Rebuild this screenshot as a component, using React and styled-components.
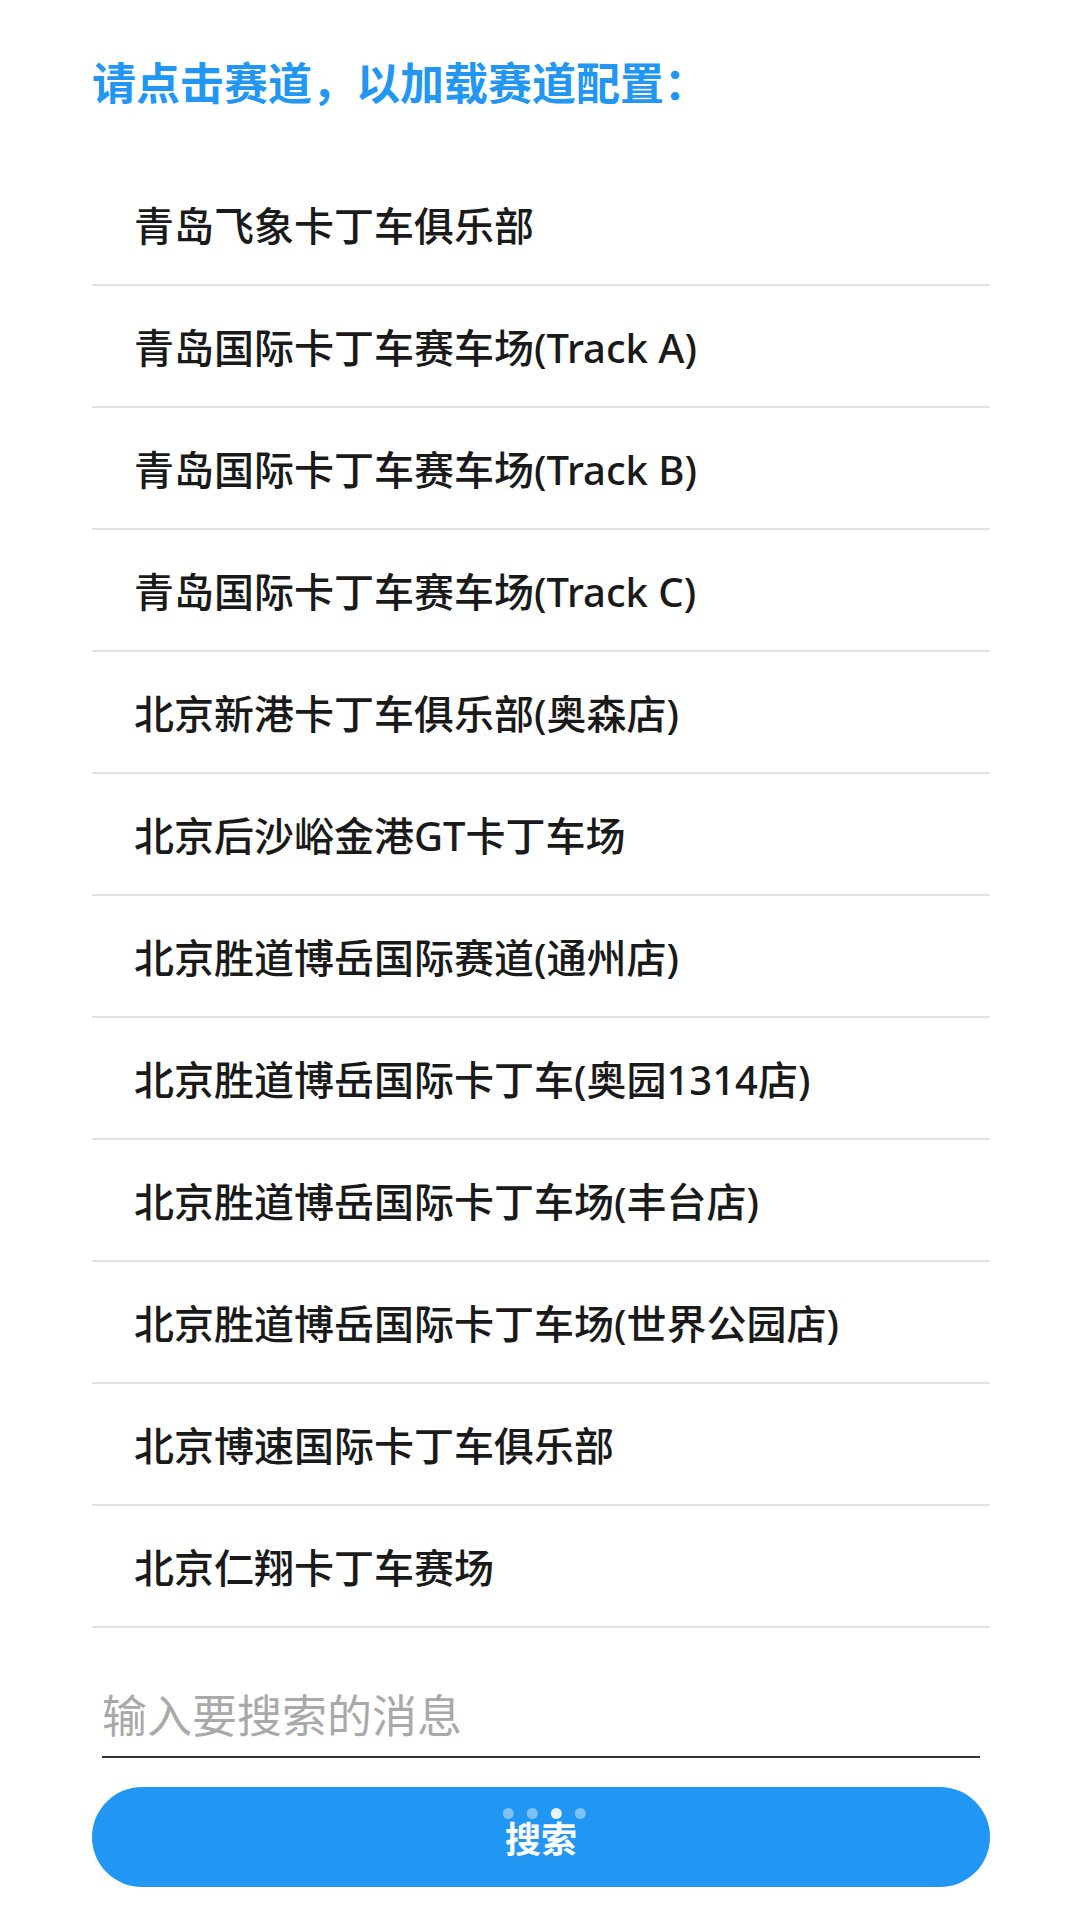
import React, { useState } from "react";
import styled, { createGlobalStyle } from "styled-components";

const GlobalStyle = createGlobalStyle`
  html, body {
    margin: 0;
    padding: 0;
    background: #ffffff;
  }
  body {
    font-family: "Noto Sans", "Noto Sans CJK SC", sans-serif;
  }
  * {
    box-sizing: border-box;
  }
`;

const Page = styled.div`
  width: 1080px;
  min-height: 1920px;
  padding: 53px 90px 0 92px;
  display: flex;
  flex-direction: column;
`;

const Title = styled.h1`
  margin: 0;
  font-size: 44px;
  line-height: 60px;
  font-weight: 700;
  color: #2196f3;
`;

const TrackList = styled.ul`
  list-style: none;
  margin: 51px 0 0;
  padding: 0;
`;

const TrackRow = styled.li`
  height: 122px;
  padding-left: 42px;
  display: flex;
  align-items: center;
  border-bottom: 2px solid #e2e2e2;
  font-size: 40px;
  font-weight: 500;
  color: #1a1a1a;
  cursor: pointer;
`;

const SearchInput = styled.input`
  margin: 48px 10px 0;
  height: 82px;
  padding: 0 0 2px;
  border: none;
  border-bottom: 2px solid #333333;
  outline: none;
  font-family: inherit;
  font-size: 45px;
  color: #1a1a1a;
  background: transparent;

  &::placeholder {
    color: #a9a9a9;
  }
`;

const SearchButton = styled.button`
  position: relative;
  margin-top: 29px;
  height: 100px;
  border: none;
  border-radius: 50px;
  background: #2196f3;
  color: #ffffff;
  font-family: inherit;
  font-size: 36px;
  font-weight: 700;
  display: flex;
  align-items: center;
  justify-content: center;
  padding: 0;
  cursor: pointer;
`;

const LoadingDots = styled.span`
  position: absolute;
  top: 21px;
  left: 50%;
  transform: translateX(-46%);
  display: flex;
  gap: 13px;
`;

const Dot = styled.span`
  width: 11px;
  height: 11px;
  border-radius: 50%;
  background: ${(p) => (p.$active ? "#e8f3fd" : "rgba(190, 222, 250, 0.6)")};
`;

const tracks = [
  "青岛飞象卡丁车俱乐部",
  "青岛国际卡丁车赛车场(Track A)",
  "青岛国际卡丁车赛车场(Track B)",
  "青岛国际卡丁车赛车场(Track C)",
  "北京新港卡丁车俱乐部(奥森店)",
  "北京后沙峪金港GT卡丁车场",
  "北京胜道博岳国际赛道(通州店)",
  "北京胜道博岳国际卡丁车(奥园1314店)",
  "北京胜道博岳国际卡丁车场(丰台店)",
  "北京胜道博岳国际卡丁车场(世界公园店)",
  "北京博速国际卡丁车俱乐部",
  "北京仁翔卡丁车赛场",
];

export default function App() {
  const [keyword, setKeyword] = useState("");

  return (
    <>
      <GlobalStyle />
      <Page>
        <Title>请点击赛道，以加载赛道配置：</Title>

        <TrackList>
          {tracks.map((name) => (
            <TrackRow key={name}>{name}</TrackRow>
          ))}
        </TrackList>

        <SearchInput
          value={keyword}
          onChange={(e) => setKeyword(e.target.value)}
          placeholder="输入要搜索的消息"
        />

        <SearchButton>
          <LoadingDots>
            {[0, 1, 2, 3].map((i) => (
              <Dot key={i} $active={i === 2} />
            ))}
          </LoadingDots>
          搜索
        </SearchButton>
      </Page>
    </>
  );
}
